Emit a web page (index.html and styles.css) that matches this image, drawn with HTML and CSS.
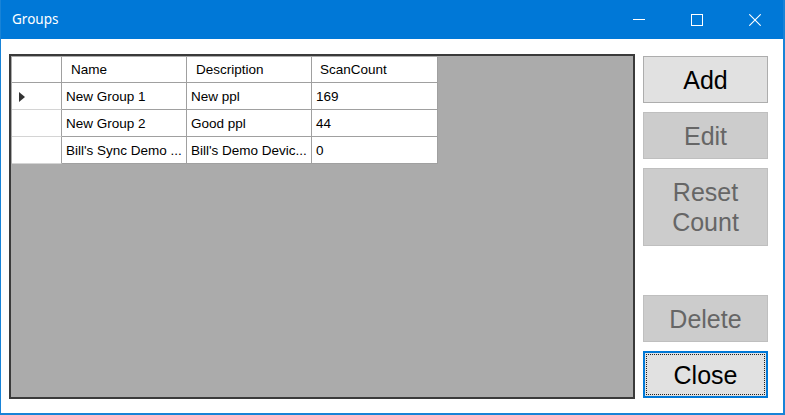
FILE: index.html
```html
<!DOCTYPE html>
<html>
<head>
<meta charset="utf-8">
<link rel="stylesheet" href="styles.css">
</head>
<body>
<div class="window">
  <div class="titlebar">
    <span class="title">Groups</span>
    <div class="controls">
      <div class="cbtn"><svg width="12" height="12" viewBox="0 0 12 12"><line x1="0" y1="5.5" x2="12" y2="5.5" stroke="#fff" stroke-width="1"/></svg></div>
      <div class="cbtn"><svg width="12" height="12" viewBox="0 0 12 12"><rect x="0.5" y="0.5" width="11" height="11" fill="none" stroke="#fff" stroke-width="1"/></svg></div>
      <div class="cbtn"><svg width="12" height="12" viewBox="0 0 12 12"><path d="M0.3 0.3 L11.7 11.7 M11.7 0.3 L0.3 11.7" stroke="#fff" stroke-width="1.1" fill="none"/></svg></div>
    </div>
  </div>
  <div class="client">
    <div class="grid">
      <div class="dg">
        <div class="row head">
          <div class="c rh"></div>
          <div class="c w1">Name</div>
          <div class="c w2">Description</div>
          <div class="c w3">ScanCount</div>
        </div>
        <div class="row">
          <div class="c rh"><span class="tri"></span></div>
          <div class="c w1">New Group 1</div>
          <div class="c w2">New ppl</div>
          <div class="c w3">169</div>
        </div>
        <div class="row">
          <div class="c rh"></div>
          <div class="c w1">New Group 2</div>
          <div class="c w2">Good ppl</div>
          <div class="c w3">44</div>
        </div>
        <div class="row">
          <div class="c rh"></div>
          <div class="c w1">Bill's Sync Demo ...</div>
          <div class="c w2">Bill's Demo Devic...</div>
          <div class="c w3">0</div>
        </div>
      </div>
    </div>
    <div class="buttons">
      <div class="btn add">Add</div>
      <div class="btn dis edit">Edit</div>
      <div class="btn dis reset">Reset<br>Count</div>
      <div class="btn dis del">Delete</div>
      <div class="btn focus close"><span class="focusrect">Close</span></div>
    </div>
  </div>
</div>
</body>
</html>
```

FILE: styles.css
```css
html, body {
  margin: 0;
  padding: 0;
  background: #ffffff;
}
.window {
  width: 785px;
  height: 415px;
  box-sizing: border-box;
  border-left: 1px solid #1883d7;
  border-right: 2px solid #1883d7;
  border-bottom: 2px solid #1883d7;
  background: #ffffff;
  display: flex;
  flex-direction: column;
  overflow: hidden;
}
.titlebar {
  height: 39px;
  background: #0078d7;
  display: flex;
  align-items: center;
  flex-shrink: 0;
}
.title {
  font-family: "Segoe UI", "Noto Sans", sans-serif;
  font-size: 13.5px;
  color: #ffffff;
  padding-left: 11px;
  padding-bottom: 1px;
  flex: 1;
}
.controls {
  display: flex;
  height: 39px;
  margin-right: -1px;
}
.cbtn {
  width: 58px;
  height: 39px;
  display: flex;
  align-items: center;
  justify-content: center;
}
.cbtn svg {
  display: block;
  margin-top: 1px;
}
.client {
  flex: 1;
  display: flex;
  padding: 15px 15px 0 8px;
  gap: 8px;
}
.grid {
  width: 626px;
  height: 345px;
  box-sizing: border-box;
  border: 2px solid #3a3a3a;
  background: #ababab;
  padding: 1px 0 0 1px;
}
.dg {
  font-family: "Liberation Sans", Arial, sans-serif;
  font-size: 13.5px;
  color: #000;
}
.row {
  display: flex;
  height: 27px;
}
.row.head {
  height: 26px;
}
.c {
  box-sizing: border-box;
  background: #ffffff;
  border-right: 1px solid #a0a0a0;
  border-bottom: 1px solid #a0a0a0;
  display: flex;
  align-items: center;
  padding-left: 4px;
  white-space: nowrap;
  overflow: hidden;
}
.head .c {
  padding-left: 9px;
}
.head .c.w3 {
  padding-left: 8px;
}
.c.rh {
  width: 50px;
  padding-left: 7px;
  border-bottom-color: #d4d4d4;
}
.head .c.rh {
  border-bottom-color: #a0a0a0;
}
.c.w1 { width: 125px; }
.c.w2 { width: 125px; }
.c.w3 { width: 126px; }
.tri {
  width: 0;
  height: 0;
  border-top: 5px solid transparent;
  border-bottom: 5px solid transparent;
  border-left: 6px solid #333333;
  margin-top: 2px;
}
.buttons {
  display: flex;
  flex-direction: column;
  width: 125px;
  padding-top: 2px;
}
.btn {
  box-sizing: border-box;
  height: 47px;
  border: 1px solid #adadad;
  background: #e1e1e1;
  font-family: "Liberation Sans", Arial, sans-serif;
  font-size: 25px;
  color: #000;
  display: flex;
  align-items: center;
  justify-content: center;
  text-align: center;
  line-height: 30px;
}
.btn.dis {
  background: #cccccc;
  border-color: #bfbfbf;
  color: #666666;
}
.edit { margin-top: 9px; }
.reset { margin-top: 9px; height: 78px; }
.del { margin-top: 49px; }
.close {
  margin-top: 9px;
  border: 2px solid #0078d7;
  padding: 1px;
}
.focusrect {
  box-sizing: border-box;
  width: 100%;
  height: 100%;
  border: 1px dotted #222;
  display: flex;
  align-items: center;
  justify-content: center;
}
```
